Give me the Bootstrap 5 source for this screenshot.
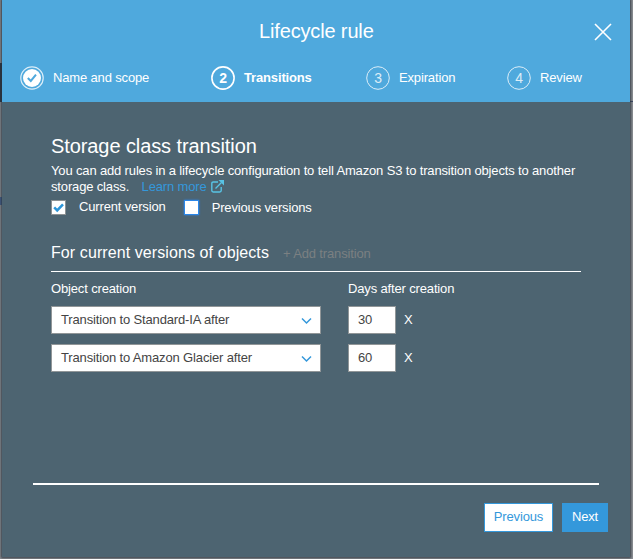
<!DOCTYPE html>
<html lang="en">
<head>
<meta charset="utf-8">
<meta name="viewport" content="width=device-width, initial-scale=1">
<title>Lifecycle rule</title>
<link href="https://cdn.jsdelivr.net/npm/bootstrap@5.3.0/dist/css/bootstrap.min.css" rel="stylesheet">
<style>
body{font-family:"Liberation Sans",Arial,sans-serif;font-size:13px;line-height:16px;background:linear-gradient(#2b3440,#2b3440) 0 63px/2px 39px no-repeat,linear-gradient(#3d4a66,#3d4a66) 100% 101px/3px 1px no-repeat,linear-gradient(#44608c,#44608c) 0 197px/2px 8px no-repeat,#8b8e94;height:559px;overflow:hidden;padding:0 3px 2px 2px}
.wizard{height:557px;background:#4d6471;box-shadow:0 0 2px 1px rgba(40,48,58,.85);color:#fff;letter-spacing:-.15px}
.wizard-head{height:102px;background:#4fa9dd}
.wizard-title{font-size:20px;line-height:24px;padding-top:19px;padding-left:257px;height:66px}
.close-x{width:18px;height:18px;margin:4px 18px 0 0}
.steps{padding-left:18px}
.step{height:24px}
.step svg{width:24px;height:24px;margin-right:9px;flex:none}
.s1{width:191px}.s2{width:155px}.s3{width:141px}
.wizard-main{height:381px;padding:32px 49px 0 49px}
.wizard-main h2{font-size:20px;line-height:24px;margin:0 0 4px;letter-spacing:-.09px}
.wizard-main h3{font-size:16px;line-height:20px;margin:0 14px 0 0;letter-spacing:.09px}
.intro{padding-top:1px}
.ext{width:13px;height:13px;margin-left:1px;vertical-align:-2px}
.more{color:#3498db;margin-left:9px}
.checks{height:25px;padding-top:4px}
.form-check-input.cb{width:15px;height:15px;margin:1px 13px 0 0;border:1px solid #8d9294;border-radius:0;background-color:#fff;flex:none}
.cb:checked{background-color:#fff!important;background-image:url("data:image/svg+xml,%3Csvg xmlns='http://www.w3.org/2000/svg' viewBox='0 0 13 13'%3E%3Cpath d='M2.2 6.4l3 3L11 3.3' fill='none' stroke='%232d96d9' stroke-width='2.5'/%3E%3C/svg%3E")!important;background-size:13px}
.form-check-input.cb-focus{border-color:#2b86e8;box-shadow:0 0 2px #2b86e8;margin-left:18px}
.t-old{padding-top:1px}
.section-head{height:42px;padding-top:13px;margin-top:10px;border-bottom:1px solid #fff}
.add{color:#7b8082;padding-top:3px;letter-spacing:-.15px}
.labels{height:34px;padding-top:9px}
.c1{width:297px;flex:none}
.field{height:28px;border:1px solid #919698;border-radius:0;background:#fff;color:#444;font-size:13px;line-height:16px;padding:5px 9px 5px}
.form-control.field{padding:4px 9px 6px;letter-spacing:-.15px}
.form-control.field:focus{box-shadow:none}
.pick{width:270px}
.days{width:48px}
.pick svg{width:11px;height:8px;margin:5px -1px 0 0}
.field-row{height:38px}
.remove{padding:6px 0 0 8px}
.wizard-foot{margin-left:31px;margin-right:31px;padding:18px 0 0;border-top:2px solid #fff}
.wizard-foot .btn{--bs-btn-border-radius:0;--bs-btn-font-size:13px;--bs-btn-line-height:16px;height:29px;padding:5px 0 6px;border:1px solid #3498db;letter-spacing:-.15px}
.prev{width:69px;background:#fff;color:#3498db}
.next{width:46px;background:#3498db;color:#fff;margin:0 -9px 0 9px}
</style>
<script src="https://cdn.jsdelivr.net/npm/bootstrap@5.3.0/dist/js/bootstrap.bundle.min.js"></script>
</head>
<body>
<div class="wizard">
  <header class="wizard-head">
    <div class="wizard-title d-flex justify-content-between">
      <span>Lifecycle rule</span>
      <svg class="close-x" viewBox="0 0 18 18" fill="none" stroke="#fff" stroke-width="1.6"><path d="M1 1l16 16M17 1L1 17"/></svg>
    </div>
    <div class="steps d-flex">
      <div class="step s1 d-flex align-items-center"><svg viewBox="0 0 24 24"><circle cx="12" cy="12" r="11.2" fill="none" stroke="#fff" stroke-opacity=".8" stroke-width="1.2"/><circle cx="12" cy="12" r="9" fill="#fff"/><path d="M7.8 12l3 3 5.2-6.3" fill="none" stroke="#4fa9dd" stroke-width="2"/></svg><span>Name and scope</span></div>
      <div class="step s2 d-flex align-items-center fw-bold"><svg viewBox="0 0 24 24"><circle cx="12" cy="12" r="11.1" fill="none" stroke="#fff" stroke-width="1.6"/><text x="12" y="17" text-anchor="middle" fill="#fff" font-size="14">2</text></svg><span>Transitions</span></div>
      <div class="step s3 d-flex align-items-center"><svg viewBox="0 0 24 24" opacity=".8"><circle cx="12" cy="12" r="11.3" fill="none" stroke="#fff" stroke-width="1"/><text x="12" y="17" text-anchor="middle" fill="#fff" font-size="14">3</text></svg><span>Expiration</span></div>
      <div class="step d-flex align-items-center"><svg viewBox="0 0 24 24" opacity=".8"><circle cx="12" cy="12" r="11.3" fill="none" stroke="#fff" stroke-width="1"/><text x="12" y="17" text-anchor="middle" fill="#fff" font-size="14">4</text></svg><span>Review</span></div>
    </div>
  </header>
  <main class="wizard-main">
    <h2 class="fw-normal">Storage class transition</h2>
    <div class="intro"><span class="text-nowrap">You can add rules in a lifecycle configuration to tell Amazon S3 to transition objects to another</span><br>storage class. <a class="more text-decoration-none" href="#">Learn more <svg class="ext" viewBox="0 0 13 13" fill="none" stroke="#58c3e4" stroke-width="1.4"><path d="M7 2H2.2Q.8 2 .8 3.4v7.2Q.8 12 2.2 12h6.6q1.4 0 1.4-1.4V7M4.5 8.5L10.5 2.5"/><path d="M7.5 0H13v5.5z" fill="#58c3e4" stroke="none"/></svg></a></div>
    <div class="checks d-flex align-items-start">
      <input class="form-check-input cb" type="checkbox" id="cur" checked><label for="cur">Current version</label>
      <input class="form-check-input cb cb-focus" type="checkbox" id="old"><label class="t-old" for="old">Previous versions</label>
    </div>
    <div class="section-head d-flex"><h3 class="fw-normal">For current versions of objects</h3><span class="add">+ Add transition</span></div>
    <div class="labels d-flex"><span class="c1">Object creation</span><span>Days after creation</span></div>
    <div class="field-row d-flex">
      <div class="c1"><div class="pick field d-flex justify-content-between"><span>Transition to Standard-IA after</span><svg viewBox="0 0 11 8" fill="none" stroke="#3498db" stroke-width="1.5"><path d="M1 1.5l4.5 4.5L10 1.5"/></svg></div></div>
      <input class="form-control days field" value="30" aria-label="Days"><span class="remove">X</span>
    </div>
    <div class="field-row d-flex">
      <div class="c1"><div class="pick field d-flex justify-content-between"><span>Transition to Amazon Glacier after</span><svg viewBox="0 0 11 8" fill="none" stroke="#3498db" stroke-width="1.5"><path d="M1 1.5l4.5 4.5L10 1.5"/></svg></div></div>
      <input class="form-control days field" value="60" aria-label="Days"><span class="remove">X</span>
    </div>
  </main>
  <footer class="wizard-foot d-flex justify-content-end">
    <button class="btn prev" type="button">Previous</button>
    <button class="btn next" type="button">Next</button>
  </footer>
</div>
</body>
</html>
